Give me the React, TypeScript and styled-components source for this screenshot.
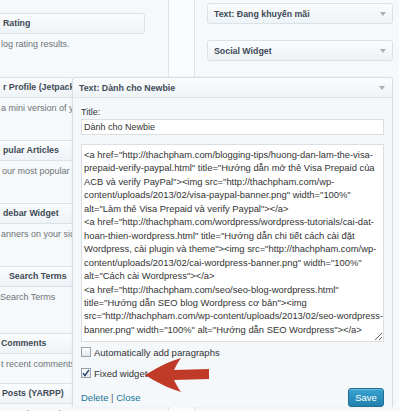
import React from "react";
import styled, { createGlobalStyle } from "styled-components";

const GlobalStyle = createGlobalStyle`
  html, body { margin: 0; padding: 0; }
  body { font-family: "Liberation Sans", Arial, sans-serif; background: #fbfcfd; }
  * { box-sizing: border-box; }
`;

const Page = styled.div`
  display: flex;
  align-items: stretch;
  width: 399px;
  height: 411px;
  overflow: hidden;
  background: #fbfcfd;
`;

const AvailablePanel = styled.div`
  width: 169px;
  flex: none;
  border-right: 1px solid #dce4ea;
  background: #f6f9fb;
  padding: 13px 23px 0 0;
`;

const Item = styled.div<{ $h: number; $covered: boolean }>`
  height: ${(p) => p.$h}px;
  ${(p) => (p.$covered ? "width: 72px; overflow: hidden;" : "")}
`;

const ItemHeader = styled.div<{ $indent: number }>`
  height: 21px;
  margin-left: -10px;
  width: calc(100% + 10px);
  min-width: 155px;
  padding-left: ${(p) => 12 + p.$indent}px;
  border: 1px solid #dae2e8;
  border-radius: 3px;
  background: linear-gradient(#fbfcfd, #eef3f7);
  font-weight: bold;
  font-size: 8.8px;
  line-height: 19px;
  color: #3e4a55;
  white-space: nowrap;
  overflow: hidden;
`;

const ItemDesc = styled.div<{ $indent: number }>`
  margin-top: 4px;
  padding-left: ${(p) => p.$indent}px;
  font-size: 9px;
  line-height: 12px;
  color: #6d7379;
  white-space: nowrap;
  overflow: hidden;
`;

const Sidebar = styled.div`
  flex: 1;
  min-width: 0;
  margin-left: 25px;
  border-left: 1px solid #dce4ea;
  background: #f6f9fb;
  padding: 3px 6px 0 12px;
`;

const ClosedWidget = styled.div`
  display: flex;
  align-items: center;
  justify-content: space-between;
  height: 21px;
  margin-bottom: 16px;
  padding: 0 6px 0 6px;
  border: 1px solid #dae2e8;
  border-radius: 3px;
  background: linear-gradient(#fbfcfd, #eef3f7);
`;

const WidgetTitle = styled.span`
  font-weight: bold;
  font-size: 8.8px;
  color: #3e4a55;
  white-space: nowrap;
`;

const Caret = styled.span`
  width: 0;
  height: 0;
  border-left: 3px solid transparent;
  border-right: 3px solid transparent;
  border-top: 4px solid #a9afb4;
  margin-top: 1px;
`;

const OpenWidget = styled.div`
  position: relative;
  z-index: 2;
  margin-left: -135px;
  border: 1px solid #d6dfe6;
  border-bottom: none;
  border-radius: 3px 3px 0 0;
  background: #f4f8fb;
  box-shadow: 0 0 2px rgba(120, 140, 160, 0.15);
`;

const OpenHeader = styled.div`
  display: flex;
  align-items: center;
  justify-content: space-between;
  height: 20px;
  padding: 0 7px 0 6px;
  border-bottom: 1px solid #dde5eb;
  background: linear-gradient(#fbfcfd, #eef3f7);
  border-radius: 3px 3px 0 0;
`;

const Body = styled.div`
  padding: 8px 8px 0 8px;
`;

const FieldLabel = styled.div`
  font-size: 9px;
  line-height: 12px;
  color: #333;
`;

const TextInput = styled.input`
  display: block;
  width: 100%;
  height: 16px;
  margin: 1px 0 0 0;
  padding: 0 2px;
  border: 1px solid #dcdfe2;
  background: #fff;
  font-family: "Liberation Sans", Arial, sans-serif;
  font-size: 9px;
  color: #333;
  outline: none;
`;

const CodeArea = styled.textarea`
  display: block;
  width: 100%;
  height: 198px;
  margin: 9px 0 0 0;
  padding: 3px 2px;
  border: 1px solid #dcdfe2;
  background: #fff;
  font-family: "Liberation Sans", Arial, sans-serif;
  font-size: 9.4px;
  line-height: 13.46px;
  color: #333;
  white-space: pre;
  overflow: hidden;
  resize: vertical;
  outline: none;
`;

const CheckRow = styled.div<{ $gap: number }>`
  position: relative;
  display: flex;
  align-items: center;
  height: 14px;
  margin-top: ${(p) => p.$gap}px;
  font-size: 9.5px;
  color: #333;
`;

const CheckBox = styled.span`
  display: inline-flex;
  align-items: center;
  justify-content: center;
  width: 10px;
  height: 10px;
  margin-right: 3px;
  border: 1px solid #99a2aa;
  background: linear-gradient(#ffffff, #e4e8ec);
`;

const Annotation = styled.svg`
  position: absolute;
  left: 64px;
  top: -9px;
`;

const Footer = styled.div`
  display: flex;
  align-items: center;
  justify-content: space-between;
  margin-top: 8px;
`;

const Links = styled.div`
  font-size: 9.5px;
  color: #555;
`;

const LinkText = styled.a`
  color: #21759b;
  text-decoration: none;
`;

const SaveButton = styled.button`
  width: 36px;
  height: 19px;
  padding: 0;
  border: 1px solid #1f6f93;
  border-radius: 3px;
  background: linear-gradient(#3aa3d3, #2180ac);
  color: #fff;
  font-family: "Liberation Sans", Arial, sans-serif;
  font-size: 9.5px;
  box-shadow: inset 0 1px 0 rgba(255, 255, 255, 0.25);
`;

const items = [
  { title: "Rating", ti: 0, desc: "log rating results.", di: 1, h: 64, covered: false },
  { title: "r Profile (Jetpack)", ti: 0, desc: "a mini version of your Gravatar Profile.", di: 1, h: 63, covered: true },
  { title: "pular Articles", ti: 0, desc: "our most popular posts.", di: 2, h: 63, covered: true },
  { title: "debar Widget", ti: 0, desc: "anners on your sidebar.", di: 1, h: 63, covered: true },
  { title: "Search Terms", ti: 6, desc: "Search Terms", di: 0, h: 67, covered: true },
  { title: "Comments", ti: -2, desc: "t recent comments", di: 1, h: 50, covered: true },
  { title: "Posts (YARPP)", ti: -1, desc: "Posts (YARPP)", di: 1, h: 40, covered: true },
];

const code = [
  '<a href="http://thachpham.com/blogging-tips/huong-dan-lam-the-visa-',
  'prepaid-verify-paypal.html" title="Hướng dẫn mở thẻ Visa Prepaid của',
  'ACB và verify PayPal"><img src="http://thachpham.com/wp-',
  'content/uploads/2013/02/visa-paypal-banner.png" width="100%"',
  'alt="Làm thẻ Visa Prepaid và verify Paypal"></a>',
  '<a href="http://thachpham.com/wordpress/wordpress-tutorials/cai-dat-',
  'hoan-thien-wordpress.html" title="Hướng dẫn chi tiết cách cài đặt',
  'Wordpress, cài plugin và theme"><img src="http://thachpham.com/wp-',
  'content/uploads/2013/02/cai-wordpress-banner.png" width="100%"',
  'alt="Cách cài Wordpress"></a>',
  '<a href="http://thachpham.com/seo/seo-blog-wordpress.html"',
  'title="Hướng dẫn SEO blog Wordpress cơ bản"><img',
  'src="http://thachpham.com/wp-content/uploads/2013/02/seo-wordpress-',
  'banner.png" width="100%" alt="Hướng dẫn SEO Wordpress"></a>',
].join("\n");

export default function App() {
  return (
    <>
      <GlobalStyle />
      <Page>
        <AvailablePanel>
          {items.map((it) => (
            <Item key={it.title + it.h} $h={it.h} $covered={it.covered}>
              <ItemHeader $indent={it.ti}>{it.title}</ItemHeader>
              <ItemDesc $indent={it.di}>{it.desc}</ItemDesc>
            </Item>
          ))}
        </AvailablePanel>
        <Sidebar>
          <ClosedWidget>
            <WidgetTitle>Text: Đang khuyến mãi</WidgetTitle>
            <Caret />
          </ClosedWidget>
          <ClosedWidget>
            <WidgetTitle>Social Widget</WidgetTitle>
            <Caret />
          </ClosedWidget>
          <OpenWidget>
            <OpenHeader>
              <WidgetTitle>Text: Dành cho Newbie</WidgetTitle>
              <Caret />
            </OpenHeader>
            <Body>
              <FieldLabel>Title:</FieldLabel>
              <TextInput defaultValue="Dành cho Newbie" />
              <CodeArea readOnly defaultValue={code} wrap="off" />
              <CheckRow $gap={3}>
                <CheckBox />
                Automatically add paragraphs
              </CheckRow>
              <CheckRow $gap={7}>
                <CheckBox>
                  <svg width="8" height="8" viewBox="0 0 8 8">
                    <path d="M1 4.2 L3 6.5 L7 0.8" fill="none" stroke="#2b4570" strokeWidth="1.4" />
                  </svg>
                </CheckBox>
                Fixed widget
                <Annotation width="64" height="36" viewBox="0 0 64 36">
                  <path
                    d="M0 18 C10 12 22 5 36 1 C33 5 31 9 29 13 L64 12 L64 22 L29 23 C31 27 33 31 36 35 C22 31 10 24 0 18 Z"
                    fill="#bf3b27"
                  />
                </Annotation>
              </CheckRow>
              <Footer>
                <Links>
                  <LinkText href="#">Delete</LinkText> | <LinkText href="#">Close</LinkText>
                </Links>
                <SaveButton>Save</SaveButton>
              </Footer>
            </Body>
          </OpenWidget>
        </Sidebar>
      </Page>
    </>
  );
}
